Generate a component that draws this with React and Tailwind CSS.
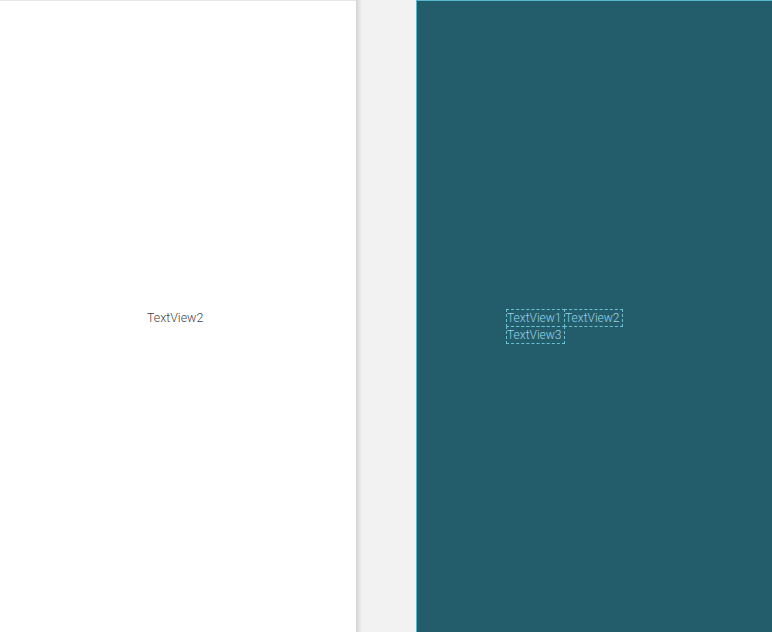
export default function App() {
  const font = { fontFamily: 'Roboto, "Liberation Sans", sans-serif' };
  return (
    <div className="flex h-[632px] w-[772px] overflow-hidden bg-[#f2f2f2]" style={font}>
      <div className="relative flex h-full w-[356px] shrink-0 flex-col border-t border-[#e6e6e6] bg-white">
        <div className="mt-[308px] ml-[147px] text-[12.4px] font-light leading-[17px] text-[#444444]">TextView2</div>
      </div>
      <div className="h-full w-[6px] shrink-0 bg-gradient-to-r from-[#d4d4d4] to-[#f2f2f2]" />
      <div className="w-[54px] shrink-0" />
      <div className="flex h-full w-[400px] shrink-0 flex-col border-l border-t border-[#56b8cc] bg-[#235d6c]">
        <div className="mt-[308px] ml-[89px] flex flex-col">
          <div className="flex">
            <div className="h-[18px] w-[59px] border border-dashed border-[#6cc0d4] text-[12px] font-light leading-[16px] text-[#9bd3e3]">TextView1</div>
            <div className="-ml-px h-[18px] w-[59px] border border-dashed border-[#6cc0d4] text-[12px] font-light leading-[16px] text-[#9bd3e3]">TextView2</div>
          </div>
          <div className="-mt-px h-[18px] w-[59px] border border-dashed border-[#6cc0d4] text-[12px] font-light leading-[16px] text-[#9bd3e3]">TextView3</div>
        </div>
      </div>
    </div>
  );
}
